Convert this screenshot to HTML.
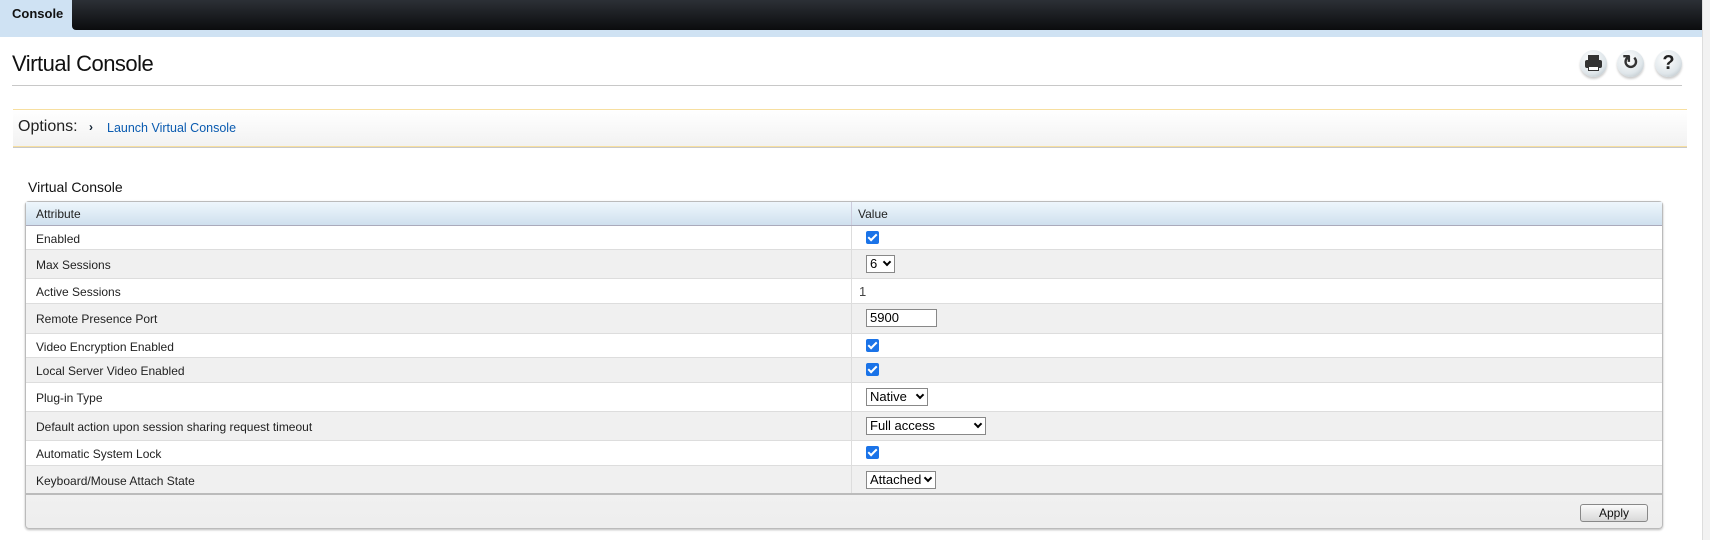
<!DOCTYPE html>
<html><head><style>
*{margin:0;padding:0;box-sizing:border-box}
body{width:1710px;height:540px;background:#fff;font-family:"Liberation Sans",Arial,sans-serif;position:relative;overflow:hidden}
.abs{position:absolute}
.row{position:absolute;left:26px;width:1636px;font-size:12px;color:#222}
.row .a{position:absolute;left:10px}
.row .v{position:absolute;left:825px;top:0;bottom:0;border-left:1px solid #ddd;width:811px}
.cb{position:absolute;left:14px;width:13px;height:13px;background:#1a73e8;border-radius:2px}
.cb:after{content:"";position:absolute;left:4px;top:1px;width:3px;height:7px;border:solid #fff;border-width:0 2px 2px 0;transform:rotate(45deg)}
.sel{position:absolute;left:14px;height:18px;border:1px solid #888;background:#fff;font-size:13px;line-height:16px;padding-left:3px;color:#000}
.sel i{position:absolute;right:4px;top:3px;width:6px;height:6px;border:solid #000;border-width:0 2px 2px 0;transform:rotate(45deg)}
.ic{position:absolute;top:50px;width:27px;height:27px;border-radius:50%;background:radial-gradient(circle at 40% 35%,#fff,#dfe6ea 60%,#aab4ba);box-shadow:0 2px 2px #ccc}
</style></head><body>
<div class="abs" style="left:0;top:0;width:1702px;height:37px;background:#cfe2f3"></div>
<div class="abs" style="left:72px;top:0;width:1630px;height:30px;background:linear-gradient(#2c3036,#0b0c0e);border-bottom-left-radius:4px"></div>
<div class="abs" style="left:0;top:0;width:72px;height:30px;font-size:13px;font-weight:bold;line-height:28px;padding-left:12px;color:#111">Console</div>
<div class="abs" style="left:1702px;top:0;width:8px;height:540px;background:#f2f2f2;border-left:1px solid #ddd"></div>

<div class="abs" style="left:12px;top:51px;font-size:22px;color:#111;letter-spacing:-0.5px">Virtual Console</div>
<div class="abs" style="left:12px;top:85px;width:1670px;height:1px;background:#c8c8c8"></div>
<div class="ic" style="left:1580px"><div class="abs" style="left:8px;top:5px;width:11px;height:5px;background:#333"></div><div class="abs" style="left:5px;top:10px;width:17px;height:8px;background:#333;border-radius:2px"></div><div class="abs" style="left:8px;top:16px;width:11px;height:5px;background:#fff;border:1px solid #333"></div></div>
<div class="ic" style="left:1617px;font:bold 20px 'Liberation Sans';text-align:center;line-height:27px;color:#333">↻</div>
<div class="ic" style="left:1655px;font:bold 20px 'Liberation Sans';text-align:center;line-height:27px;color:#222">?</div>

<div class="abs" style="left:13px;top:109px;width:1674px;height:38px;background:linear-gradient(#fff,#f2f2f2);border-top:1px solid #f7dfa0;border-bottom:1px solid #f7dfa0;box-shadow:0 1px 0 #c8c8c8"></div>
<div class="abs" style="left:18px;top:118px;font-size:16px;color:#222">Options:</div>
<div class="abs" style="left:89px;top:120px;font-size:12px;color:#123;font-weight:bold">›</div>
<div class="abs" style="left:107px;top:121px;font-size:12.5px;color:#0a5bb0">Launch Virtual Console</div>

<div class="abs" style="left:28px;top:179px;font-size:14px;color:#111">Virtual Console</div>
<div class="abs" style="left:25px;top:201px;width:1638px;height:328px;border:1px solid #bbb;border-radius:4px;box-shadow:0 1px 2px #bbb;background:linear-gradient(#fff,#eee)"></div>
<div class="row" style="top:202px;height:24px;background:linear-gradient(#eef6fc,#cfe0ee);border-bottom:1px solid #aab"><span class="a" style="top:5px">Attribute</span><div class="v" style="border-left-color:#ccd"><span style="position:absolute;left:6px;top:5px">Value</span></div></div>

<div class="row" style="top:226px;height:24px;background:#fff;border-bottom:1px solid #ddd"><span class="a" style="top:6px">Enabled</span><div class="v"><div class="cb" style="top:5px"></div></div></div>
<div class="row" style="top:250px;height:29px;background:#f0f0f0;border-bottom:1px solid #ddd"><span class="a" style="top:8px">Max Sessions</span><div class="v"><div class="sel" style="top:5px;width:29px">6<i></i></div></div></div>
<div class="row" style="top:279px;height:25px;background:#fff;border-bottom:1px solid #ddd"><span class="a" style="top:6px">Active Sessions</span><div class="v"><span style="position:absolute;left:7px;top:5px;font-size:13px;color:#444">1</span></div></div>
<div class="row" style="top:304px;height:30px;background:#f0f0f0;border-bottom:1px solid #ddd"><span class="a" style="top:8px">Remote Presence Port</span><div class="v"><div class="sel" style="top:5px;width:71px">5900</div></div></div>
<div class="row" style="top:334px;height:24px;background:#fff;border-bottom:1px solid #ddd"><span class="a" style="top:6px">Video Encryption Enabled</span><div class="v"><div class="cb" style="top:5px"></div></div></div>
<div class="row" style="top:358px;height:25px;background:#f0f0f0;border-bottom:1px solid #ddd"><span class="a" style="top:6px">Local Server Video Enabled</span><div class="v"><div class="cb" style="top:5px"></div></div></div>
<div class="row" style="top:383px;height:29px;background:#fff;border-bottom:1px solid #ddd"><span class="a" style="top:8px">Plug-in Type</span><div class="v"><div class="sel" style="top:5px;width:62px">Native<i></i></div></div></div>
<div class="row" style="top:412px;height:29px;background:#f0f0f0;border-bottom:1px solid #ddd"><span class="a" style="top:8px">Default action upon session sharing request timeout</span><div class="v"><div class="sel" style="top:5px;width:120px">Full access<i></i></div></div></div>
<div class="row" style="top:441px;height:25px;background:#fff;border-bottom:1px solid #ddd"><span class="a" style="top:6px">Automatic System Lock</span><div class="v"><div class="cb" style="top:5px"></div></div></div>
<div class="row" style="top:466px;height:29px;background:#f0f0f0;border-bottom:2px solid #bbb"><span class="a" style="top:8px">Keyboard/Mouse Attach State</span><div class="v"><div class="sel" style="top:5px;width:70px">Attached<i></i></div></div></div>

<div class="abs" style="left:1580px;top:504px;width:68px;height:18px;border:1px solid #888;border-radius:3px;background:linear-gradient(#fafafa,#d8d8d8);font-size:12px;text-align:center;line-height:16px;color:#111">Apply</div>
</body></html>
